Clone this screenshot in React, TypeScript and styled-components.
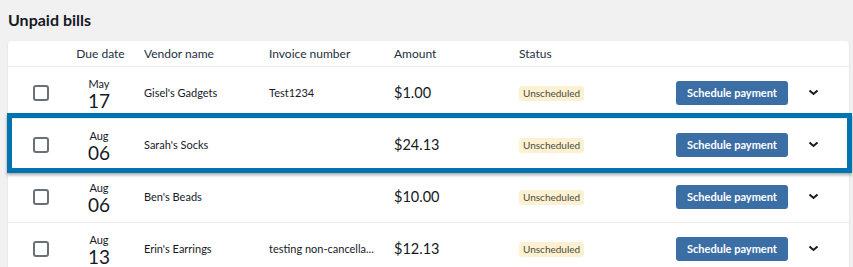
import React from 'react'
import styled, { createGlobalStyle } from 'styled-components'

const GlobalStyle = createGlobalStyle`
    body {
        margin: 0;
        background: #f2f1f1;
        font-family: Lato, "Noto Sans", sans-serif;
        color: #16191f;
    }
`;

const Page = styled.div`
    padding: 10px 4px 0 8px;
    height: 267px;
    box-sizing: border-box;
    overflow: hidden;
`;

const Title = styled.h2`
    margin: 0 0 12px;
    font-size: 16px;
    font-weight: 700;
    line-height: 19px;
`;

const Card = styled.div`
    position: relative;
    background: #fff;
    border-radius: 4px 4px 0 0;
    box-shadow: 0 1px 2px rgba(0,0,0,.12);
`;

const Row = styled.div<{ $header?: boolean }>`
    display: grid;
    grid-template-columns: 46px 90px 125px 125px 125px 157px 112px 1fr;
    align-items: center;
    height: ${p => p.$header ? '25px' : '51px'};
    border-bottom: 1px solid #e9ebed;
    font-size: 12px;
`;

const HeadCell = styled.div<{ $center?: boolean }>`
    font-size: 12px;
    color: #232f3e;
    text-align: ${p => p.$center ? 'center' : 'left'};
    padding-left: ${p => p.$center ? '3px' : '0'};
`;

const Check = styled.div`
    margin-left: 25px;
    width: 12px;
    height: 12px;
    border: 2px solid #687078;
    border-radius: 3px;
`;

const DateCell = styled.div`
    display: flex;
    flex-direction: column;
    align-items: center;
    line-height: 1;
    padding-top: 2px;
`;

const Month = styled.span`
    font-size: 11px;
`;

const Day = styled.span`
    font-size: 19px;
    margin-top: 2px;
`;

const Text = styled.div`
    font-size: 11px;
    white-space: nowrap;
`;

const Amount = styled.div`
    font-size: 14.5px;
`;

const Badge = styled.span`
    display: inline-block;
    background: #fdf1d2;
    color: #4a4a3c;
    font-size: 10px;
    line-height: 15px;
    padding: 0 4px;
    border-radius: 3px;
`;

const PayButton = styled.button`
    width: 112px;
    height: 24px;
    background: #3b6ea5;
    color: #fff;
    border: 0;
    border-radius: 3px;
    font-family: inherit;
    font-size: 11px;
    font-weight: 700;
    cursor: pointer;
`;

const Chevron = styled.svg`
    margin-left: 20px;
`;

const Highlight = styled.div`
    position: absolute;
    left: -1px;
    right: -3px;
    top: 72px;
    height: 60px;
    box-sizing: border-box;
    border: 5px solid #0073b0;
    box-shadow: 0 2px 3px rgba(0,0,0,.35);
    pointer-events: none;
`;

const bills = [
    { month: 'May', day: '17', vendor: "Gisel's Gadgets", invoice: 'Test1234', amount: '$1.00' },
    { month: 'Aug', day: '06', vendor: "Sarah's Socks", invoice: '', amount: '$24.13' },
    { month: 'Aug', day: '06', vendor: "Ben's Beads", invoice: '', amount: '$10.00' },
    { month: 'Aug', day: '13', vendor: "Erin's Earrings", invoice: 'testing non-cancella...', amount: '$12.13' },
];

const App = () => <>
    <GlobalStyle />
    <Page>
        <Title>Unpaid bills</Title>
        <Card>
            <Row $header>
                <div />
                <HeadCell $center>Due date</HeadCell>
                <HeadCell>Vendor name</HeadCell>
                <HeadCell>Invoice number</HeadCell>
                <HeadCell>Amount</HeadCell>
                <HeadCell>Status</HeadCell>
                <div />
                <div />
            </Row>
            {
                bills.map((b, i) => <Row key={ i }>
                    <Check />
                    <DateCell>
                        <Month>{ b.month }</Month>
                        <Day>{ b.day }</Day>
                    </DateCell>
                    <Text>{ b.vendor }</Text>
                    <Text>{ b.invoice }</Text>
                    <Amount>{ b.amount }</Amount>
                    <div><Badge>Unscheduled</Badge></div>
                    <PayButton>Schedule payment</PayButton>
                    <Chevron width="11" height="7" viewBox="0 0 11 7">
                        <path d="M1.5 1.5 L5.5 5 L9.5 1.5" fill="none" stroke="#16191f" strokeWidth="2" />
                    </Chevron>
                </Row>)
            }
            <Highlight />
        </Card>
    </Page>
</>
export default App
